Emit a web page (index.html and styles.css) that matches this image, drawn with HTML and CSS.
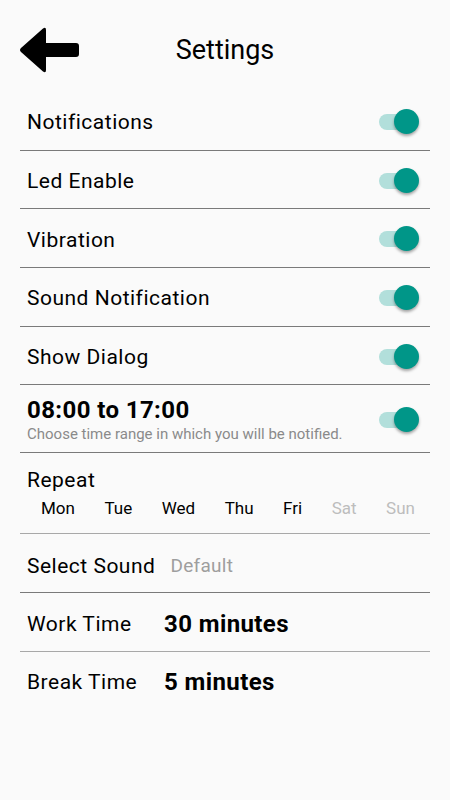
FILE: index.html
```html
<!DOCTYPE html>
<html lang="en">
<head>
    <meta charset="UTF-8">
    <meta name="viewport" content="width=device-width, initial-scale=1.0">
    <title>Settings</title>
    <link rel="stylesheet" href="styles.css">
</head>
<body>
    <div class="header">
        <button class="back" aria-label="Back">
            <svg width="62" height="46" viewBox="0 0 62 46">
                <path d="M3 21 L25 1.5 Q28 -0.5 28 3 L28 16 L58 16 Q61 16 61 19 L61 27 Q61 30 58 30 L28 30 L28 43 Q28 46.5 25 44.5 L3 25 Q1 23 3 21 Z" fill="#000"/>
            </svg>
        </button>
        <h1>Settings</h1>
    </div>

    <div class="list">
        <div class="row">
            <span class="label">Notifications</span>
            <span class="switch"><span class="thumb"></span></span>
        </div>
        <div class="row">
            <span class="label">Led Enable</span>
            <span class="switch"><span class="thumb"></span></span>
        </div>
        <div class="row">
            <span class="label">Vibration</span>
            <span class="switch"><span class="thumb"></span></span>
        </div>
        <div class="row">
            <span class="label">Sound Notification</span>
            <span class="switch"><span class="thumb"></span></span>
        </div>
        <div class="row">
            <span class="label">Show Dialog</span>
            <span class="switch"><span class="thumb"></span></span>
        </div>
        <div class="row time-row">
            <div class="time-text">
                <div class="time">08:00 to 17:00</div>
                <div class="hint">Choose time range in which you will be notified.</div>
            </div>
            <span class="switch"><span class="thumb"></span></span>
        </div>
        <div class="row repeat-row light">
            <div class="label">Repeat</div>
            <div class="days">
                <span>Mon</span>
                <span>Tue</span>
                <span>Wed</span>
                <span>Thu</span>
                <span>Fri</span>
                <span class="off">Sat</span>
                <span class="off">Sun</span>
            </div>
        </div>
        <div class="row start">
            <span class="label">Select Sound</span>
            <span class="sound">Default</span>
        </div>
        <div class="row start light">
            <span class="label fixed">Work Time</span>
            <span class="value">30 minutes</span>
        </div>
        <div class="row start last">
            <span class="label fixed">Break Time</span>
            <span class="value">5 minutes</span>
        </div>
    </div>
</body>
</html>
```

FILE: styles.css
```css
body {
    font-family: Roboto, "Noto Sans", sans-serif;
    background-color: #fafafa;
    color: #000;
    margin: 0;
    padding: 0;
}
.header {
    position: relative;
    height: 92px;
    display: flex;
    align-items: center;
    justify-content: center;
}
.header h1 {
    font-size: 27px;
    font-weight: 400;
    margin: 0;
    padding-top: 8px;
}
.back {
    position: absolute;
    left: 18px;
    top: 27px;
    background: none;
    border: none;
    padding: 0;
    line-height: 0;
}
.list {
    margin: 0 20px;
}
.row {
    box-sizing: border-box;
    height: 58.7px;
    display: flex;
    align-items: center;
    justify-content: space-between;
    padding: 3px 14px 0 7px;
    border-bottom: 1px solid #7a7a7a;
}
.row.light {
    border-bottom-color: #a8a8a8;
}
.label {
    font-size: 21px;
    letter-spacing: 0.5px;
}
.switch {
    position: relative;
    width: 37px;
    height: 16px;
    margin-top: -1px;
    border-radius: 8px;
    background-color: #b2dfdb;
}
.thumb {
    position: absolute;
    right: -3px;
    top: -5px;
    width: 25px;
    height: 25px;
    border-radius: 50%;
    background-color: #009688;
    box-shadow: 0 2px 3px rgba(0, 0, 0, 0.35);
}
.time-row {
    height: 68px;
    padding-top: 2px;
}
.time-row .switch {
    margin-top: 0;
}
.time {
    font-size: 24px;
    font-weight: 700;
    letter-spacing: 0.4px;
    line-height: 28px;
}
.hint {
    font-size: 15px;
    color: #8a8a8a;
    line-height: 18px;
    margin-top: 1px;
}
.repeat-row {
    height: 81px;
    flex-direction: column;
    align-items: stretch;
    justify-content: flex-start;
    padding-top: 14px;
    padding-right: 0;
    padding-left: 0;
}
.repeat-row .label {
    padding-left: 7px;
    line-height: 26px;
}
.days {
    display: flex;
    justify-content: space-between;
    padding: 0 15px 0 21px;
    margin-top: 5px;
    font-size: 17px;
}
.days .off {
    color: #bdbdbd;
}
.row.start {
    justify-content: flex-start;
    padding-top: 5px;
}
.row.last {
    border-bottom: none;
    padding-top: 1px;
}
.sound {
    font-size: 19px;
    letter-spacing: 0.3px;
    color: #9e9e9e;
    margin-left: 15px;
}
.fixed {
    width: 137px;
}
.value {
    font-size: 24px;
    font-weight: 700;
    letter-spacing: 0.4px;
}
```
